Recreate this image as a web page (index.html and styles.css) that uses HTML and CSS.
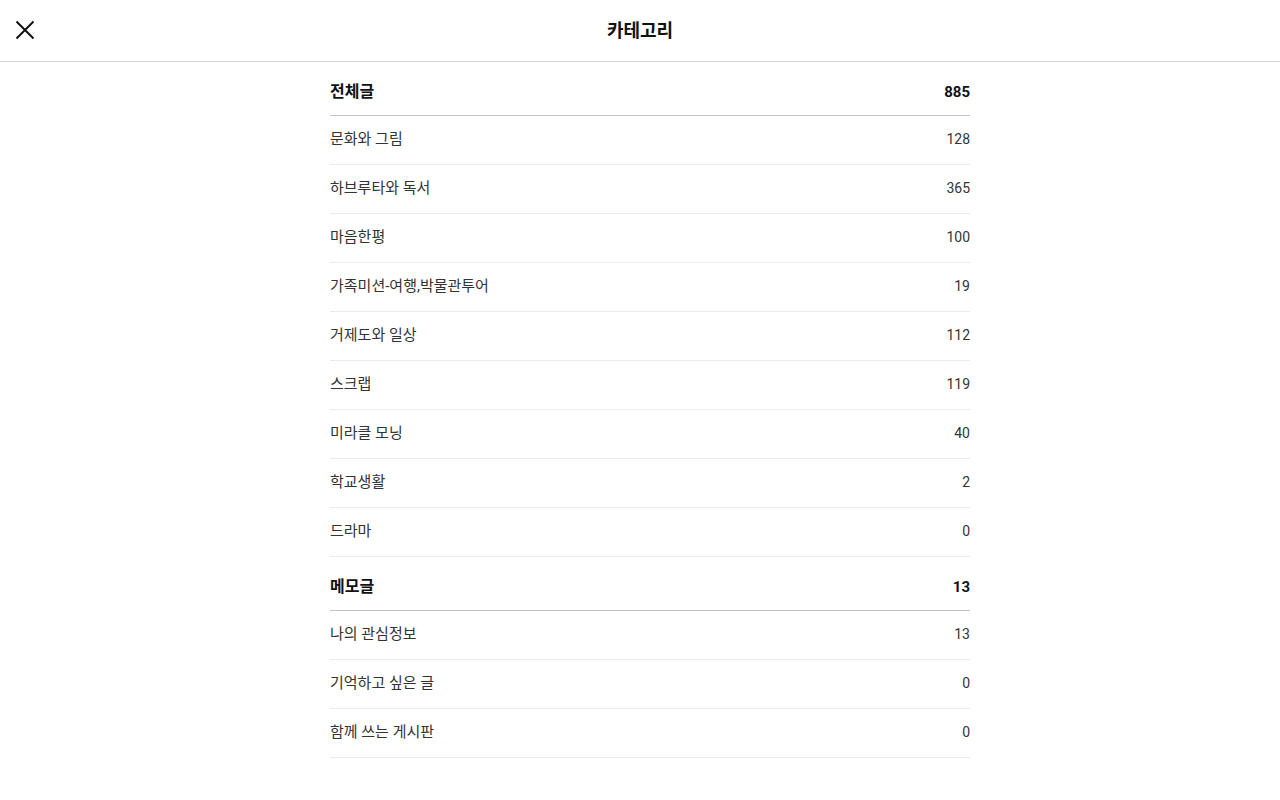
FILE: index.html
```html
<!DOCTYPE html>
<html lang="ko">
<head>
<meta charset="utf-8">
<title>카테고리</title>
<link rel="stylesheet" href="styles.css">
</head>
<body>
<header class="topbar">
  <button class="close" aria-label="닫기">
    <svg width="20" height="20" viewBox="0 0 20 20"><path d="M1.5 1.5 L18.5 18.5 M18.5 1.5 L1.5 18.5" stroke="#111" stroke-width="2" fill="none"/></svg>
  </button>
  <h1 class="title">카테고리</h1>
</header>
<main class="list">
  <div class="row head"><span class="name">전체글</span><span class="num">885</span></div>
  <div class="row"><span class="name">문화와 그림</span><span class="num">128</span></div>
  <div class="row"><span class="name">하브루타와 독서</span><span class="num">365</span></div>
  <div class="row"><span class="name">마음한평</span><span class="num">100</span></div>
  <div class="row"><span class="name">가족미션-여행,박물관투어</span><span class="num">19</span></div>
  <div class="row"><span class="name">거제도와 일상</span><span class="num">112</span></div>
  <div class="row"><span class="name">스크랩</span><span class="num">119</span></div>
  <div class="row"><span class="name">미라클 모닝</span><span class="num">40</span></div>
  <div class="row"><span class="name">학교생활</span><span class="num">2</span></div>
  <div class="row"><span class="name">드라마</span><span class="num">0</span></div>
  <div class="row head"><span class="name">메모글</span><span class="num">13</span></div>
  <div class="row"><span class="name">나의 관심정보</span><span class="num">13</span></div>
  <div class="row"><span class="name">기억하고 싶은 글</span><span class="num">0</span></div>
  <div class="row"><span class="name">함께 쓰는 게시판</span><span class="num">0</span></div>
</main>
</body>
</html>
```
FILE: styles.css
```css
html, body { margin: 0; padding: 0; background: #fff; }
body { font-family: Roboto, "Noto Sans CJK KR", sans-serif; color: #333; }
.topbar {
  position: relative;
  height: 61px;
  border-bottom: 1px solid #d4d4d4;
  display: flex;
  align-items: center;
  justify-content: center;
}
.close {
  position: absolute;
  left: 15px;
  top: 20px;
  width: 20px;
  height: 20px;
  padding: 0;
  border: 0;
  background: none;
  display: block;
}
.close svg { display: block; }
.title {
  margin: 0;
  font-size: 18px;
  font-weight: 700;
  color: #111;
  line-height: 24px;
}
.list {
  width: 640px;
  margin: 0 auto;
  padding-left: 20px;
}
.row {
  display: flex;
  justify-content: space-between;
  align-items: center;
  height: 44px;
  padding-top: 1px;
  padding-bottom: 3px;
  border-bottom: 1px solid #ebebeb;
  font-size: 14px;
  line-height: 20px;
  color: #333;
}
.row .name { font-size: 15px; }
.row.head {
  height: 53px;
  padding-top: 0;
  padding-bottom: 0;
  border-bottom-color: #c4c4c4;
  font-size: 15px;
  font-weight: 700;
  color: #111;
  align-items: flex-start;
}
.row.head span { padding-top: 20px; }
.row.head .name { font-size: 16px; }
.num { font-family: Roboto, sans-serif; }
```
